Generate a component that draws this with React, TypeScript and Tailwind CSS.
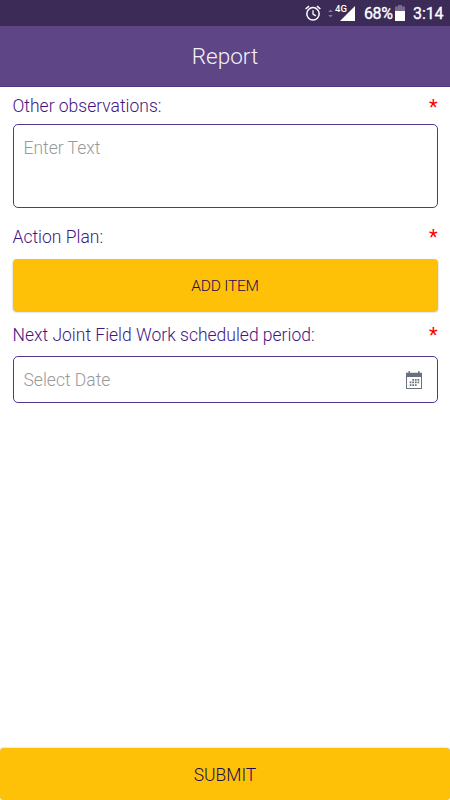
import type { ReactNode } from 'react';

function AlarmIcon() {
  return (
    <svg width="16" height="16" viewBox="0 0 16 16" fill="none" stroke="#fff" strokeWidth="1.5">
      <circle cx="8" cy="8.8" r="6.2" />
      <path d="M8 5.2v3.9l2.8 1.8" strokeWidth="1.3" />
      <path d="M.6 4 4 1.1M15.4 4 12 1.1" strokeWidth="1.5" />
    </svg>
  );
}

function DataArrowsIcon() {
  return (
    <svg width="5" height="9" viewBox="0 0 5 9" fill="#84799a">
      <path d="M.2 3 2.5.6 4.8 3zM.2 6l2.3 2.4L4.8 6z" />
    </svg>
  );
}

function SignalIcon() {
  return (
    <svg width="15" height="15" viewBox="0 0 15 15" fill="#fff">
      <path d="M15 0v15H0z" />
    </svg>
  );
}

function BatteryIcon() {
  return (
    <svg width="10" height="16" viewBox="0 0 10 16">
      <path d="M3 0h4v1.5h3V6H0V1.5h3z" fill="#776c8b" />
      <path d="M0 6h10v10H0z" fill="#fff" />
    </svg>
  );
}

function CalendarIcon() {
  return (
    <svg width="16" height="18" viewBox="0 0 16 18" fill="#68717d">
      <path d="M2.5 0h1.4v1.8h8.2V0h1.4v1.8H16V18H0V1.8h2.5zM1 6v11h14V6z" fillRule="evenodd" />
      <path d="M6.3 8h1.7v1.7H6.3zM8.9 8h1.7v1.7H8.9zM11.5 8h1.7v1.7h-1.7zM3.7 10.6h1.7v1.7H3.7zM6.3 10.6H8v1.7H6.3zM8.9 10.6h1.7v1.7H8.9zM11.5 10.6h1.7v1.7h-1.7zM3.7 13.2h1.7v1.7H3.7zM6.3 13.2H8v1.7H6.3zM8.9 13.2h1.7v1.7H8.9z" />
    </svg>
  );
}

function StatusBar() {
  return (
    <div className="flex h-[26px] shrink-0 items-center justify-end bg-[#3c2b56] pr-[7px] text-white">
      <AlarmIcon />
      <span className="ml-[7px] mt-px"><DataArrowsIcon /></span>
      <span className="ml-[2px] -mt-2 w-[12px] whitespace-nowrap text-[9.5px] leading-none font-medium">4G</span>
      <span className="-ml-[7px]"><SignalIcon /></span>
      <span className="ml-[9px] w-[28px] pt-[2px] text-base leading-none tracking-[-0.4px] [-webkit-text-stroke:0.3px_white]">68%</span>
      <span className="ml-[3px]"><BatteryIcon /></span>
      <span className="ml-[8px] w-[30px] pt-[2px] text-base leading-none tracking-[-0.1px] [-webkit-text-stroke:0.3px_white]">3:14</span>
    </div>
  );
}

function FieldLabel({ children }: { children: ReactNode }) {
  return (
    <div className="flex h-6 items-center justify-between text-[17.5px] font-light text-[#431583]">
      <label>{children}</label>
      <span className="text-xl leading-none font-normal text-[#ff0000]">*</span>
    </div>
  );
}

export default function App() {
  return (
    <div className="flex h-screen flex-col overflow-hidden bg-white font-['Roboto',sans-serif]">
      <StatusBar />
      <header className="flex h-[61px] shrink-0 items-center justify-center border-b border-[#51377e] bg-[#5e4586] pt-px">
        <h1 className="text-[22.5px] font-light text-[#f4f1f8]">Report</h1>
      </header>

      <main className="flex flex-1 flex-col px-[12.5px] pt-[7.5px]">
        <FieldLabel>Other observations:</FieldLabel>
        <div className="mt-[5.5px] h-[84px] rounded-[5px] border border-[#55378a] px-[10px] pt-[10px] text-[17.5px] font-light text-[#999999]">
          Enter Text
        </div>

        <div className="mt-[17px]">
          <FieldLabel>Action Plan:</FieldLabel>
        </div>
        <button className="mt-[10px] h-[52px] rounded-[4px] bg-[#ffc107] pt-[3px] text-[15.5px] font-light tracking-[-0.2px] text-[#1c0b55] shadow-[0_1px_2px_rgba(0,0,0,0.35)]">
          ADD ITEM
        </button>

        <div className="mt-[12px]">
          <FieldLabel>Next Joint Field Work scheduled period:</FieldLabel>
        </div>
        <div className="mt-[9px] flex h-[47px] items-center justify-between rounded-[5px] border border-[#55378a] pr-[14.5px] pl-[10px] text-[17.5px] font-light text-[#999999]">
          <span className="pt-[2px]">Select Date</span>
          <CalendarIcon />
        </div>
      </main>

      <button className="h-[52px] shrink-0 rounded-[4px] bg-[#ffc107] pt-[2px] text-[17.5px] font-light text-[#1c0b55] shadow-[0_0_2px_rgba(0,0,0,0.3)]">
        SUBMIT
      </button>
    </div>
  );
}
